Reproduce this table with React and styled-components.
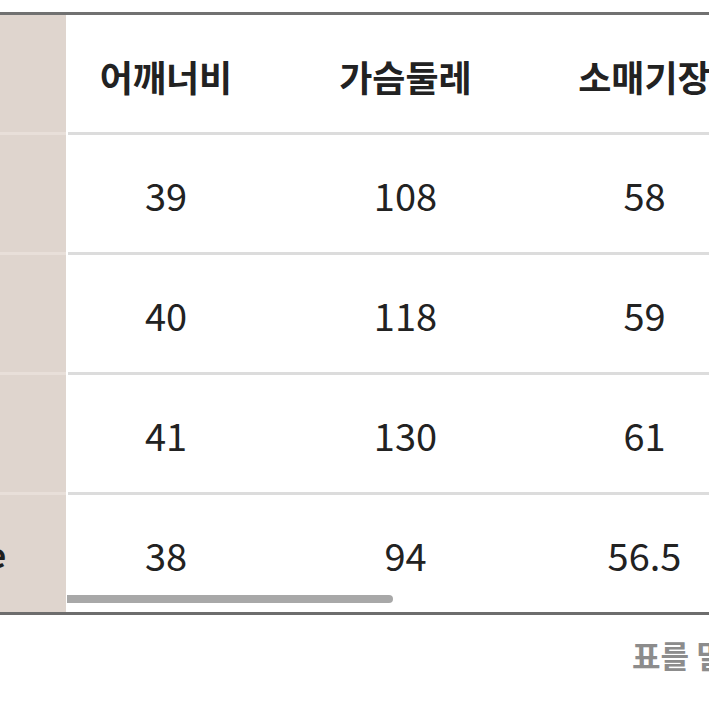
import React from "react";
import styled, { createGlobalStyle } from "styled-components";

const GlobalStyle = createGlobalStyle`
  html, body {
    margin: 0;
    padding: 0;
    background: #ffffff;
  }
  body {
    font-family: "Noto Sans CJK KR", "Noto Sans", sans-serif;
    color: #222222;
    overflow: hidden;
  }
`;

const headers = ["어깨너비", "가슴둘레", "소매기장"];

const rows = [
  { label: "S", values: ["39", "108", "58"] },
  { label: "M", values: ["40", "118", "59"] },
  { label: "L", values: ["41", "130", "61"] },
  { label: "Free size", values: ["38", "94", "56.5"] },
];

const App = () => {
  return (
    <>
      <GlobalStyle />
      <Page>
        <TableWrap>
          <Row>
            <LabelCell />
            {headers.map((h, i) => (
              <HeadCell key={h} $first={i === 0}>
                {h}
              </HeadCell>
            ))}
          </Row>
          {rows.map((row, r) => (
            <Row key={row.label}>
              <LabelCell $last={r === rows.length - 1}>
                <LabelText>{row.label}</LabelText>
              </LabelCell>
              {row.values.map((v, i) => (
                <ValueCell key={i} $first={i === 0} $last={r === rows.length - 1}>
                  {v}
                </ValueCell>
              ))}
            </Row>
          ))}
          <ScrollThumb />
        </TableWrap>
        <Note>표를 밀어서 확인해주세요</Note>
      </Page>
    </>
  );
};

export default App;

const Page = styled.div`
  width: 709px;
  height: 709px;
  padding-top: 12px;
  box-sizing: border-box;
  overflow: hidden;
`;

const TableWrap = styled.div`
  position: relative;
  border-top: 3px solid #717171;
  border-bottom: 3px solid #6d6d6d;
  overflow: hidden;
`;

const Row = styled.div`
  display: flex;
  align-items: stretch;
`;

const LabelCell = styled.div`
  flex: 0 0 66px;
  height: 117px;
  margin-right: 2px;
  background: #dfd5ce;
  border-bottom: ${(p) => (p.$last ? "0" : "3px solid #e8dfd9")};
  overflow: hidden;
  display: flex;
  align-items: center;
`;

/* label column is scrolled mostly out of view: labels are centred left of the edge */
const LabelText = styled.div`
  flex: none;
  margin-left: -66px;
  transform: translateX(-50%);
  white-space: nowrap;
  font-size: 34px;
  font-weight: 700;
  line-height: 1;
  color: #1e1e1e;
`;

const Cell = styled.div`
  flex: 0 0 ${(p) => (p.$first ? "196px" : "239px")};
  height: 115px;
  padding-top: 2px;
  padding-right: ${(p) => (p.$first ? "22px" : "0")};
  display: flex;
  align-items: center;
  justify-content: center;
  white-space: nowrap;
  line-height: 1;
`;

const HeadCell = styled(Cell)`
  border-bottom: 3px solid #dcdcdc;
  padding-top: 4px;
  height: 113px;
  font-size: 36px;
  font-weight: 700;
  color: #222222;
`;

const ValueCell = styled(Cell)`
  border-bottom: ${(p) => (p.$last ? "0" : "3px solid #dcdcdc")};
  font-size: 38px;
  font-weight: 400;
  color: #222222;
`;

const ScrollThumb = styled.div`
  position: absolute;
  left: 67px;
  bottom: 9px;
  width: 326px;
  height: 8px;
  border-radius: 0 4px 4px 0;
  background: #a8a8a8;
`;

const Note = styled.div`
  margin-top: 24px;
  padding-left: 632px;
  white-space: nowrap;
  font-size: 31px;
  font-weight: 700;
  line-height: 1;
  color: #8c8c8c;
`;
